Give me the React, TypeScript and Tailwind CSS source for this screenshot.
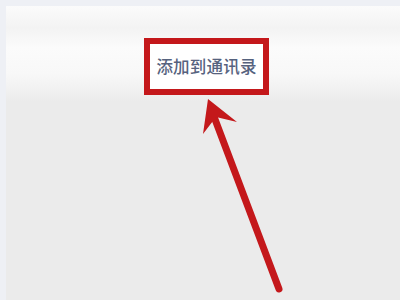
export default function App() {
  return (
    <div className="relative w-[400px] h-[300px] overflow-hidden bg-[#eef0f5] pt-[6px] pl-[6px] font-['Noto_Sans_CJK_SC',sans-serif]">
      <div className="flex flex-col h-full bg-[#ebebeb]">
        <div className="h-[100px] flex items-start pt-[32px] pl-[138px] bg-[linear-gradient(to_bottom,#fbfbfb_0%,#f3f3f3_22%,#fbfbfb_42%,#f8f8f8_68%,#ebebeb_96%)]">
          <div className="w-[125px] h-[57px] border-[6px] border-[#c4181b] bg-white flex items-center justify-center">
            <span className="text-[16.5px] font-medium leading-none text-[#56627e] tracking-[0.2px]">添加到通讯录</span>
          </div>
        </div>
        <div className="flex-1" />
      </div>
      <svg className="absolute inset-0 pointer-events-none" width="400" height="300" viewBox="0 0 400 300">
        <path d="M279 289 L213 114" stroke="#c4181b" strokeWidth="7" strokeLinecap="round" fill="none" />
        <path d="M208 99 L237 122 L216 117 L203 134 Z" fill="#c4181b" />
      </svg>
    </div>
  );
}
